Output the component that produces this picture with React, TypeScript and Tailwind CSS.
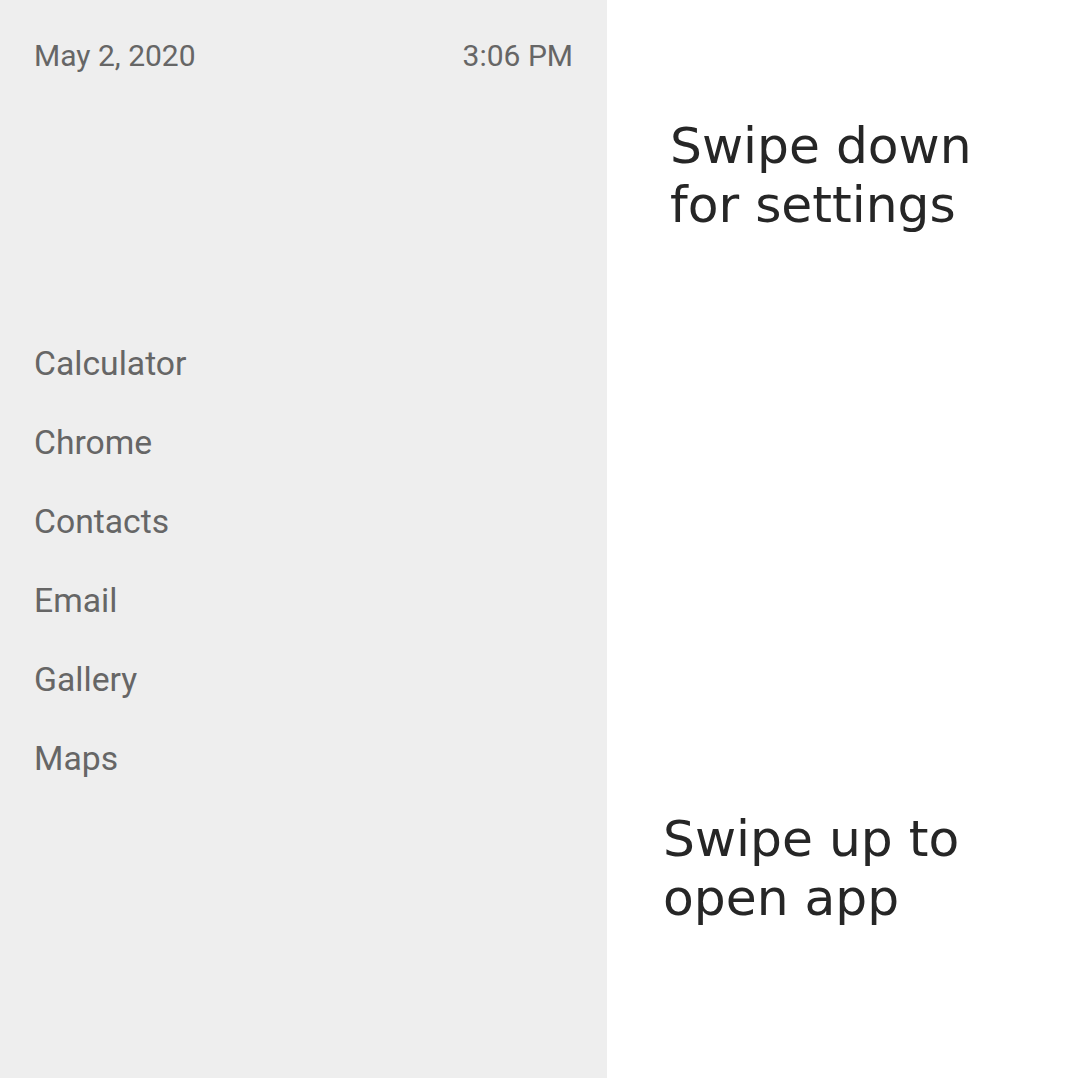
const apps = ['Calculator', 'Chrome', 'Contacts', 'Email', 'Gallery', 'Maps'];

export default function App() {
  return (
    <div className="flex w-[1080px] h-[1080px] bg-white">
      <div
        className="flex flex-col w-[607px] h-[1078px] bg-[#eeeeee] px-[34px] text-[#666666]"
        style={{ fontFamily: 'Roboto, sans-serif' }}
      >
        <div className="flex justify-between items-center h-[56px] mt-[27px] text-[30px]">
          <span>May 2, 2020</span>
          <span>3:06 PM</span>
        </div>
        <div className="flex flex-col mt-[242px]">
          {apps.map((app) => (
            <div key={app} className="h-[79px] flex items-center text-[33.7px]">
              {app}
            </div>
          ))}
        </div>
      </div>
      <div
        className="flex-1 flex flex-col justify-between text-[50.3px] leading-[59px] text-[#262626]"
        style={{ fontFamily: '"DejaVu Sans", sans-serif' }}
      >
        <div className="pl-[63px] pt-[116px]">
          Swipe down
          <br />
          for settings
        </div>
        <div className="pl-[56px] pb-[153px]">
          Swipe up to
          <br />
          open app
        </div>
      </div>
    </div>
  );
}
